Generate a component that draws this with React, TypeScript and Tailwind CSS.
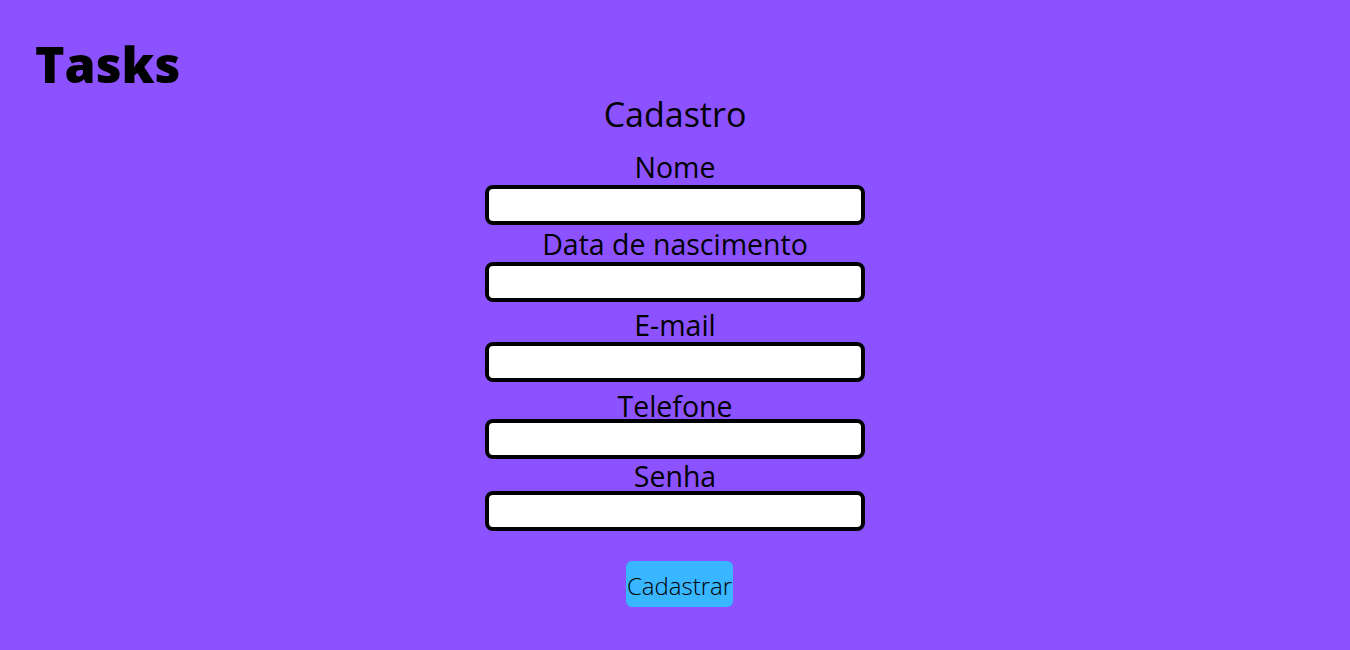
import React from "react";

const font = { fontFamily: '"Open Sans", "Noto Sans", sans-serif' };

const inputCls =
  "h-[40px] w-[380px] rounded-[8px] border-[4px] border-black bg-white outline-none";

export default function App() {
  return (
    <div className="min-h-[650px] w-full bg-[#8c52ff] text-black" style={font}>
      <header className="h-[94px] pt-[34px] pl-[35px]">
        <h1 className="text-[50px] leading-[60px] font-extrabold">Tasks</h1>
      </header>
      <main className="flex flex-col items-center">
        <h2 className="text-[34px] leading-[40px] font-normal">Cadastro</h2>
        <form className="flex flex-col items-center" onSubmit={(e) => e.preventDefault()}>
          <label className="mt-[14px] text-[28.5px] leading-[38px]">Nome</label>
          <input className={`-mt-[1px] ${inputCls}`} />
          <label className="mt-0 text-[28.5px] leading-[38px]">Data de nascimento</label>
          <input className={`-mt-[1px] ${inputCls}`} />
          <label className="mt-[4px] text-[28.5px] leading-[38px]">E-mail</label>
          <input className={`-mt-[2px] ${inputCls}`} />
          <label className="mt-[5px] text-[28.5px] leading-[38px]">Telefone</label>
          <input className={`-mt-[6px] ${inputCls}`} />
          <label className="-mt-[2px] text-[28.5px] leading-[38px]">Senha</label>
          <input type="password" className={`-mt-[4px] ${inputCls}`} />
          <button
            type="submit"
            className="mt-[30px] ml-[9px] flex h-[46px] w-[107px] items-center justify-center rounded-[6px] bg-[#38b6ff] pt-[3px] text-[24px] font-light text-black"
          >
            Cadastrar
          </button>
        </form>
      </main>
    </div>
  );
}
